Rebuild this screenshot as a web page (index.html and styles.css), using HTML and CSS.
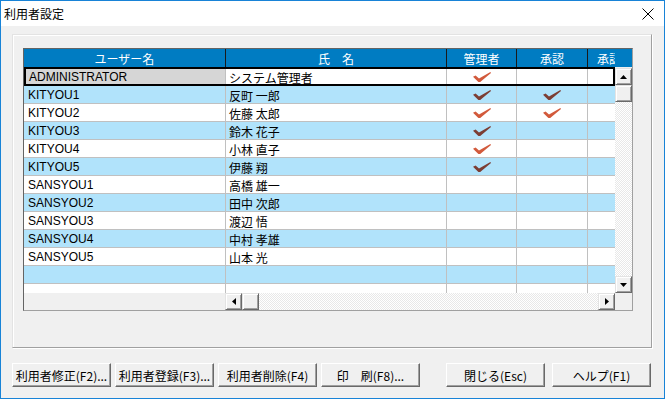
FILE: index.html
```html
<!DOCTYPE html>
<html lang="ja">
<head>
    <meta charset="UTF-8">
    <link rel="stylesheet" href="styles.css">
    <title>利用者設定</title>
</head>
<body>
    <div class="window">
        <div class="titlebar">
            <span class="title">利用者設定</span>
            <svg class="close" width="12" height="12" viewBox="0 0 12 12">
                <path d="M0.5 0.5 L11.5 11.5 M11.5 0.5 L0.5 11.5" stroke="#000" stroke-width="1" fill="none"/>
            </svg>
        </div>

        <div class="client">
            <div class="frame">
                <div class="grid">
                    <div class="head">
                        <div class="hc c1">ユーザー名</div>
                        <div class="hc c2">氏　名</div>
                        <div class="hc c3">管理者</div>
                        <div class="hc c4">承認</div>
                        <div class="hc c5"><span>承認</span></div>
                        <div class="hc corner"></div>
                    </div>

                    <div class="mid">
                        <div class="rows">
                            <div class="row sel">
                                <div class="cell c1 key">ADMINISTRATOR</div>
                                <div class="cell c2">システム管理者</div>
                                <div class="cell c3 mark"><svg class="tick" viewBox="0 0 18 10"><path d="M0 4.8 L2.6 3.6 L6 6.6 L17.4 0 L18 0.9 L7.2 10 L5.4 10 Z"/></svg></div>
                                <div class="cell c4 mark"></div>
                                <div class="cell c5"></div>
                            </div>
                            <div class="row alt">
                                <div class="cell c1">KITYOU1</div>
                                <div class="cell c2">反町 一郎</div>
                                <div class="cell c3 mark"><svg class="tick" viewBox="0 0 18 10"><path d="M0 4.8 L2.6 3.6 L6 6.6 L17.4 0 L18 0.9 L7.2 10 L5.4 10 Z"/></svg></div>
                                <div class="cell c4 mark"><svg class="tick" viewBox="0 0 18 10"><path d="M0 4.8 L2.6 3.6 L6 6.6 L17.4 0 L18 0.9 L7.2 10 L5.4 10 Z"/></svg></div>
                                <div class="cell c5"></div>
                            </div>
                            <div class="row">
                                <div class="cell c1">KITYOU2</div>
                                <div class="cell c2">佐藤 太郎</div>
                                <div class="cell c3 mark"><svg class="tick" viewBox="0 0 18 10"><path d="M0 4.8 L2.6 3.6 L6 6.6 L17.4 0 L18 0.9 L7.2 10 L5.4 10 Z"/></svg></div>
                                <div class="cell c4 mark"><svg class="tick" viewBox="0 0 18 10"><path d="M0 4.8 L2.6 3.6 L6 6.6 L17.4 0 L18 0.9 L7.2 10 L5.4 10 Z"/></svg></div>
                                <div class="cell c5"></div>
                            </div>
                            <div class="row alt">
                                <div class="cell c1">KITYOU3</div>
                                <div class="cell c2">鈴木 花子</div>
                                <div class="cell c3 mark"><svg class="tick" viewBox="0 0 18 10"><path d="M0 4.8 L2.6 3.6 L6 6.6 L17.4 0 L18 0.9 L7.2 10 L5.4 10 Z"/></svg></div>
                                <div class="cell c4 mark"></div>
                                <div class="cell c5"></div>
                            </div>
                            <div class="row">
                                <div class="cell c1">KITYOU4</div>
                                <div class="cell c2">小林 直子</div>
                                <div class="cell c3 mark"><svg class="tick" viewBox="0 0 18 10"><path d="M0 4.8 L2.6 3.6 L6 6.6 L17.4 0 L18 0.9 L7.2 10 L5.4 10 Z"/></svg></div>
                                <div class="cell c4 mark"></div>
                                <div class="cell c5"></div>
                            </div>
                            <div class="row alt">
                                <div class="cell c1">KITYOU5</div>
                                <div class="cell c2">伊藤 翔</div>
                                <div class="cell c3 mark"><svg class="tick" viewBox="0 0 18 10"><path d="M0 4.8 L2.6 3.6 L6 6.6 L17.4 0 L18 0.9 L7.2 10 L5.4 10 Z"/></svg></div>
                                <div class="cell c4 mark"></div>
                                <div class="cell c5"></div>
                            </div>
                            <div class="row">
                                <div class="cell c1">SANSYOU1</div>
                                <div class="cell c2">高橋 雄一</div>
                                <div class="cell c3"></div>
                                <div class="cell c4"></div>
                                <div class="cell c5"></div>
                            </div>
                            <div class="row alt">
                                <div class="cell c1">SANSYOU2</div>
                                <div class="cell c2">田中 次郎</div>
                                <div class="cell c3"></div>
                                <div class="cell c4"></div>
                                <div class="cell c5"></div>
                            </div>
                            <div class="row">
                                <div class="cell c1">SANSYOU3</div>
                                <div class="cell c2">渡辺 悟</div>
                                <div class="cell c3"></div>
                                <div class="cell c4"></div>
                                <div class="cell c5"></div>
                            </div>
                            <div class="row alt">
                                <div class="cell c1">SANSYOU4</div>
                                <div class="cell c2">中村 孝雄</div>
                                <div class="cell c3"></div>
                                <div class="cell c4"></div>
                                <div class="cell c5"></div>
                            </div>
                            <div class="row">
                                <div class="cell c1">SANSYOU5</div>
                                <div class="cell c2">山本 光</div>
                                <div class="cell c3"></div>
                                <div class="cell c4"></div>
                                <div class="cell c5"></div>
                            </div>
                            <div class="row alt">
                                <div class="cell c1"></div>
                                <div class="cell c2"></div>
                                <div class="cell c3"></div>
                                <div class="cell c4"></div>
                                <div class="cell c5"></div>
                            </div>
                            <div class="row">
                                <div class="cell c1"></div>
                                <div class="cell c2"></div>
                                <div class="cell c3"></div>
                                <div class="cell c4"></div>
                                <div class="cell c5"></div>
                            </div>
                        </div>

                        <div class="vscroll">
                            <div class="sbtn"><svg width="7" height="4" viewBox="0 0 7 4"><path d="M3.5 0 L7 4 L0 4 Z"/></svg></div>
                            <div class="sbtn thumb"></div>
                            <div class="track"></div>
                            <div class="sbtn"><svg width="7" height="4" viewBox="0 0 7 4"><path d="M0 0 L7 0 L3.5 4 Z"/></svg></div>
                        </div>
                    </div>

                    <div class="hscroll">
                        <div class="frozen"></div>
                        <div class="sbtn"><svg width="4" height="7" viewBox="0 0 4 7"><path d="M4 0 L4 7 L0 3.5 Z"/></svg></div>
                        <div class="sbtn thumb"></div>
                        <div class="track"></div>
                        <div class="sbtn"><svg width="4" height="7" viewBox="0 0 4 7"><path d="M0 0 L4 3.5 L0 7 Z"/></svg></div>
                        <div class="sq"></div>
                    </div>
                </div>
            </div>

            <div class="buttons">
                <button type="button" class="btn">利用者修正(F2)...</button>
                <button type="button" class="btn">利用者登録(F3)...</button>
                <button type="button" class="btn">利用者削除(F4)</button>
                <button type="button" class="btn">印　刷(F8)...</button>
                <button type="button" class="btn btn-close">閉じる(Esc)</button>
                <button type="button" class="btn btn-help">ヘルプ(F1)</button>
            </div>
        </div>
    </div>
</body>
</html>
```

FILE: styles.css
```css
body {
    margin: 0;
    font-family: "Liberation Sans", "Noto Sans CJK JP", sans-serif;
    font-size: 12px;
    color: #000;
}

.window {
    width: 665px;
    height: 399px;
    box-sizing: border-box;
    border: 1px solid #1883d7;
    background-color: #f0f0f0;
    display: flex;
    flex-direction: column;
}

.titlebar {
    height: 25px;
    background-color: #fff;
    display: flex;
    align-items: center;
    justify-content: space-between;
    padding: 0 10px 0 3px;
    flex-shrink: 0;
}

.title {
    font-family: "Noto Sans CJK JP", sans-serif;
    font-size: 12px;
    line-height: 14px;
}

.close {
    display: block;
}

.client {
    padding: 8px 0 0 11px;
}

/* group frame around the list */
.frame {
    width: 640px;
    height: 314px;
    box-sizing: border-box;
    border: 1px solid;
    border-color: #e3e3e3 #a0a0a0 #a0a0a0 #e3e3e3;
    box-shadow: inset 1px 1px 0 #fff, 1px 1px 0 #fff;
    padding: 13px 0 0 10px;
}

.grid {
    width: 610px;
    box-sizing: border-box;
    border: 1px solid;
    border-color: #646464 #a0a0a0 #a0a0a0 #646464;
    display: flex;
    flex-direction: column;
    background-color: #f0f0f0;
}

.head {
    display: flex;
    height: 18px;
    background-color: #007cc2;
    color: #fff;
    font-family: "Noto Sans CJK JP", sans-serif;
}

.hc {
    box-sizing: border-box;
    border-right: 1px solid #1a1a1a;
    text-align: center;
    padding-top: 1px;
    line-height: 17px;
    white-space: nowrap;
    overflow: hidden;
}

.hc.c5 {
    text-align: left;
    padding-left: 9px;
    border-right: none;
}

.hc.corner {
    width: 17px;
    border-right: none;
}

.c1 { width: 202px; }
.c2 { width: 221px; }
.c3 { width: 70px; }
.c4 { width: 71px; }
.c5 { width: 27px; }

.mid {
    display: flex;
    height: 226px;
    overflow: hidden;
}

.rows {
    width: 591px;
}

.row {
    display: flex;
    height: 18px;
    background-color: #fff;
}

.row.alt {
    background-color: #b1e3fb;
}

.row.sel {
    height: 19px;
    background-color: #fff;
    outline: 2px solid #000;
    outline-offset: -2px;
}

.cell {
    box-sizing: border-box;
    border-right: 1px solid #c0c0c0;
    border-bottom: 1px solid #c0c0c0;
    padding: 2px 0 0 4px;
    line-height: 15px;
    white-space: nowrap;
    overflow: hidden;
}

.cell.c2 {
    font-family: "Noto Sans CJK JP", sans-serif;
    padding-left: 3px;
}

.cell.mark {
    display: flex;
    align-items: center;
    justify-content: center;
    padding: 0;
}

.cell.c5 {
    border-right: none;
}

.row.sel .cell {
    border-bottom: none;
    padding-top: 3px;
}

.row.sel .cell.mark {
    padding-top: 0;
}

.cell.key {
    background-color: #d6d6d6;
    padding-left: 5px;
}

.tick {
    width: 18px;
    height: 10px;
    fill: #d25a3c;
}

.row.alt .tick {
    fill: #7c3e34;
}

/* scroll bars */
.vscroll {
    width: 17px;
    display: flex;
    flex-direction: column;
    background-color: #f0f0f0;
}

.track {
    flex: 1;
    background: repeating-conic-gradient(#fff 0 25%, #e8e8e8 0 50%) 0 0 / 2px 2px;
}

.sbtn {
    width: 17px;
    height: 17px;
    box-sizing: border-box;
    border: 1px solid;
    border-color: #e3e3e3 #696969 #696969 #e3e3e3;
    box-shadow: inset 1px 1px 0 #fff, inset -1px -1px 0 #a0a0a0;
    background-color: #f0f0f0;
    display: flex;
    align-items: center;
    justify-content: center;
    flex-shrink: 0;
}

.vscroll .sbtn:first-child {
    margin-top: 1px;
}

.hscroll {
    display: flex;
    height: 17px;
}

.frozen {
    width: 201px;
    background-color: #f0f0f0;
}

.sq {
    width: 17px;
    background-color: #f0f0f0;
}

/* buttons along the bottom */
.buttons {
    display: flex;
    margin-top: 15px;
}

.btn {
    width: 99px;
    height: 24px;
    padding: 0;
    font-family: "Noto Sans CJK JP", sans-serif;
    font-size: 12px;
    color: #000;
    background-color: #f0f0f0;
    border: 1px solid;
    border-color: #fff #696969 #696969 #fff;
    box-shadow: inset -1px -1px 0 #a0a0a0;
    white-space: nowrap;
}

.btn + .btn {
    margin-left: 4px;
}

.btn.btn-close {
    margin-left: 26px;
}

.btn.btn-help {
    margin-left: 7px;
}
```
